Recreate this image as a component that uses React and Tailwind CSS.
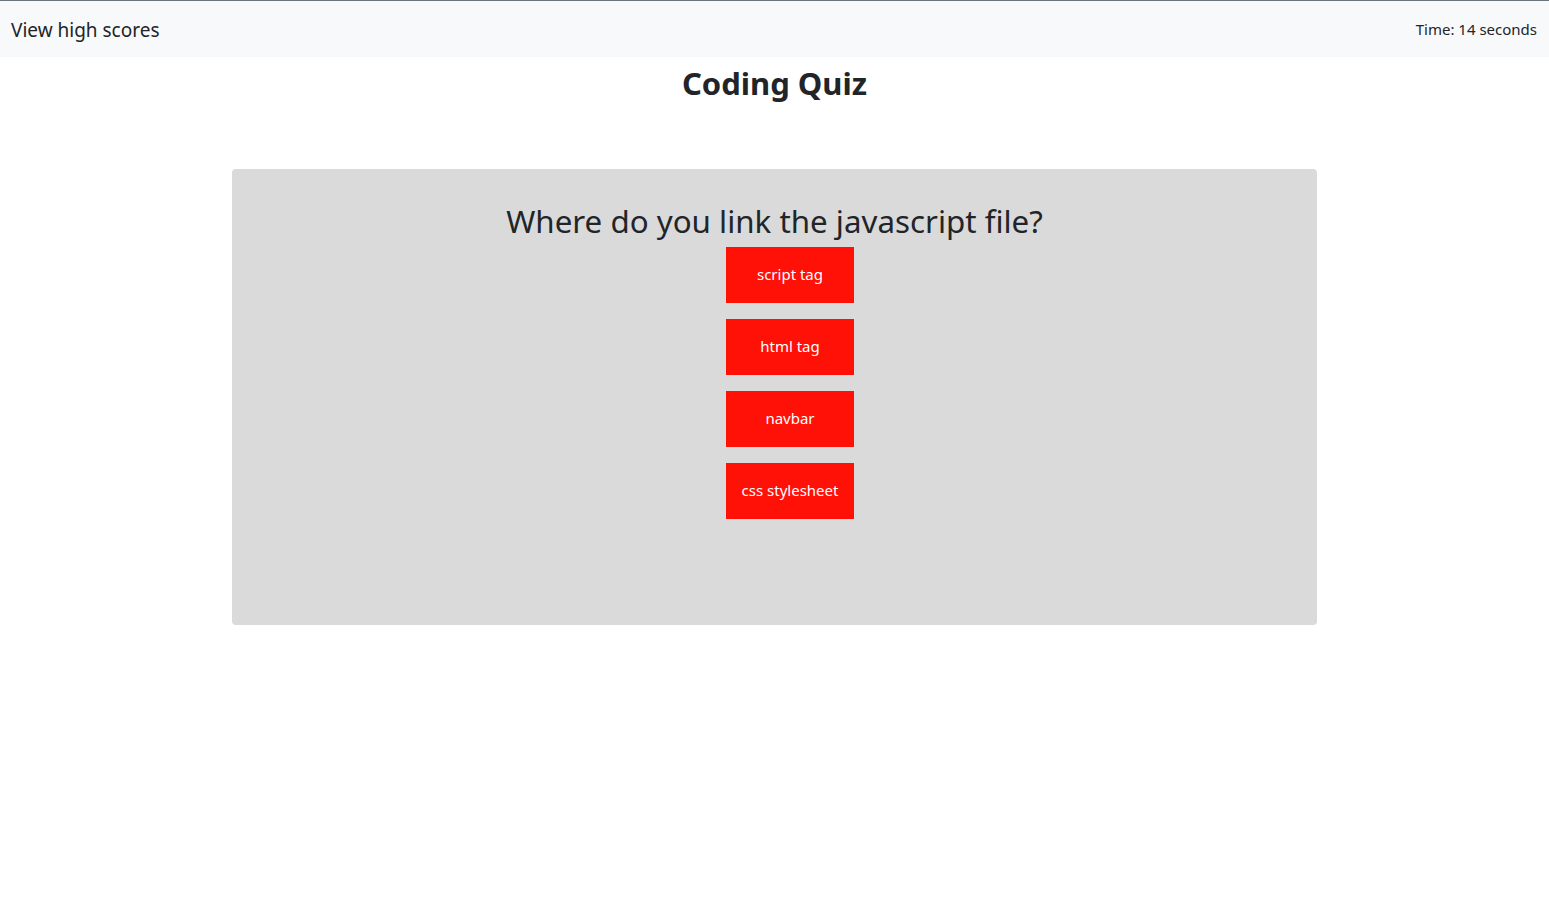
import React from 'react';

const answers = ['script tag', 'html tag', 'navbar', 'css stylesheet'];

const App = () => {
  return (
    <div className="min-h-screen bg-white text-[#212529] font-['Noto_Sans',sans-serif]">
      <nav className="h-[57px] border-t border-[#6c757d] bg-[#f8f9fa] flex items-center justify-between pl-[11px] pr-[12px]">
        <span className="text-[19px] leading-none pt-[3px]">View high scores</span>
        <span className="text-[15px] leading-none pt-[1px]">Time: 14 seconds</span>
      </nav>

      <h1 className="text-center font-bold text-[31px] leading-[1.2] mt-[8px]">Coding Quiz</h1>

      <div className="mx-auto mt-[67px] w-[1085px] h-[456px] bg-[#dadada] rounded-[4px] pt-[34px]">
        <h2 className="text-center text-[31.3px] leading-[1.2] mb-[6px]">
          Where do you link the javascript file?
        </h2>
        <div className="flex flex-col items-center gap-4 pl-[31px]">
          {answers.map((a) => (
            <button
              key={a}
              className="w-[128px] h-[56px] bg-[#ff1108] text-white text-[15px]"
            >
              {a}
            </button>
          ))}
        </div>
      </div>
    </div>
  );
};

export default App;
